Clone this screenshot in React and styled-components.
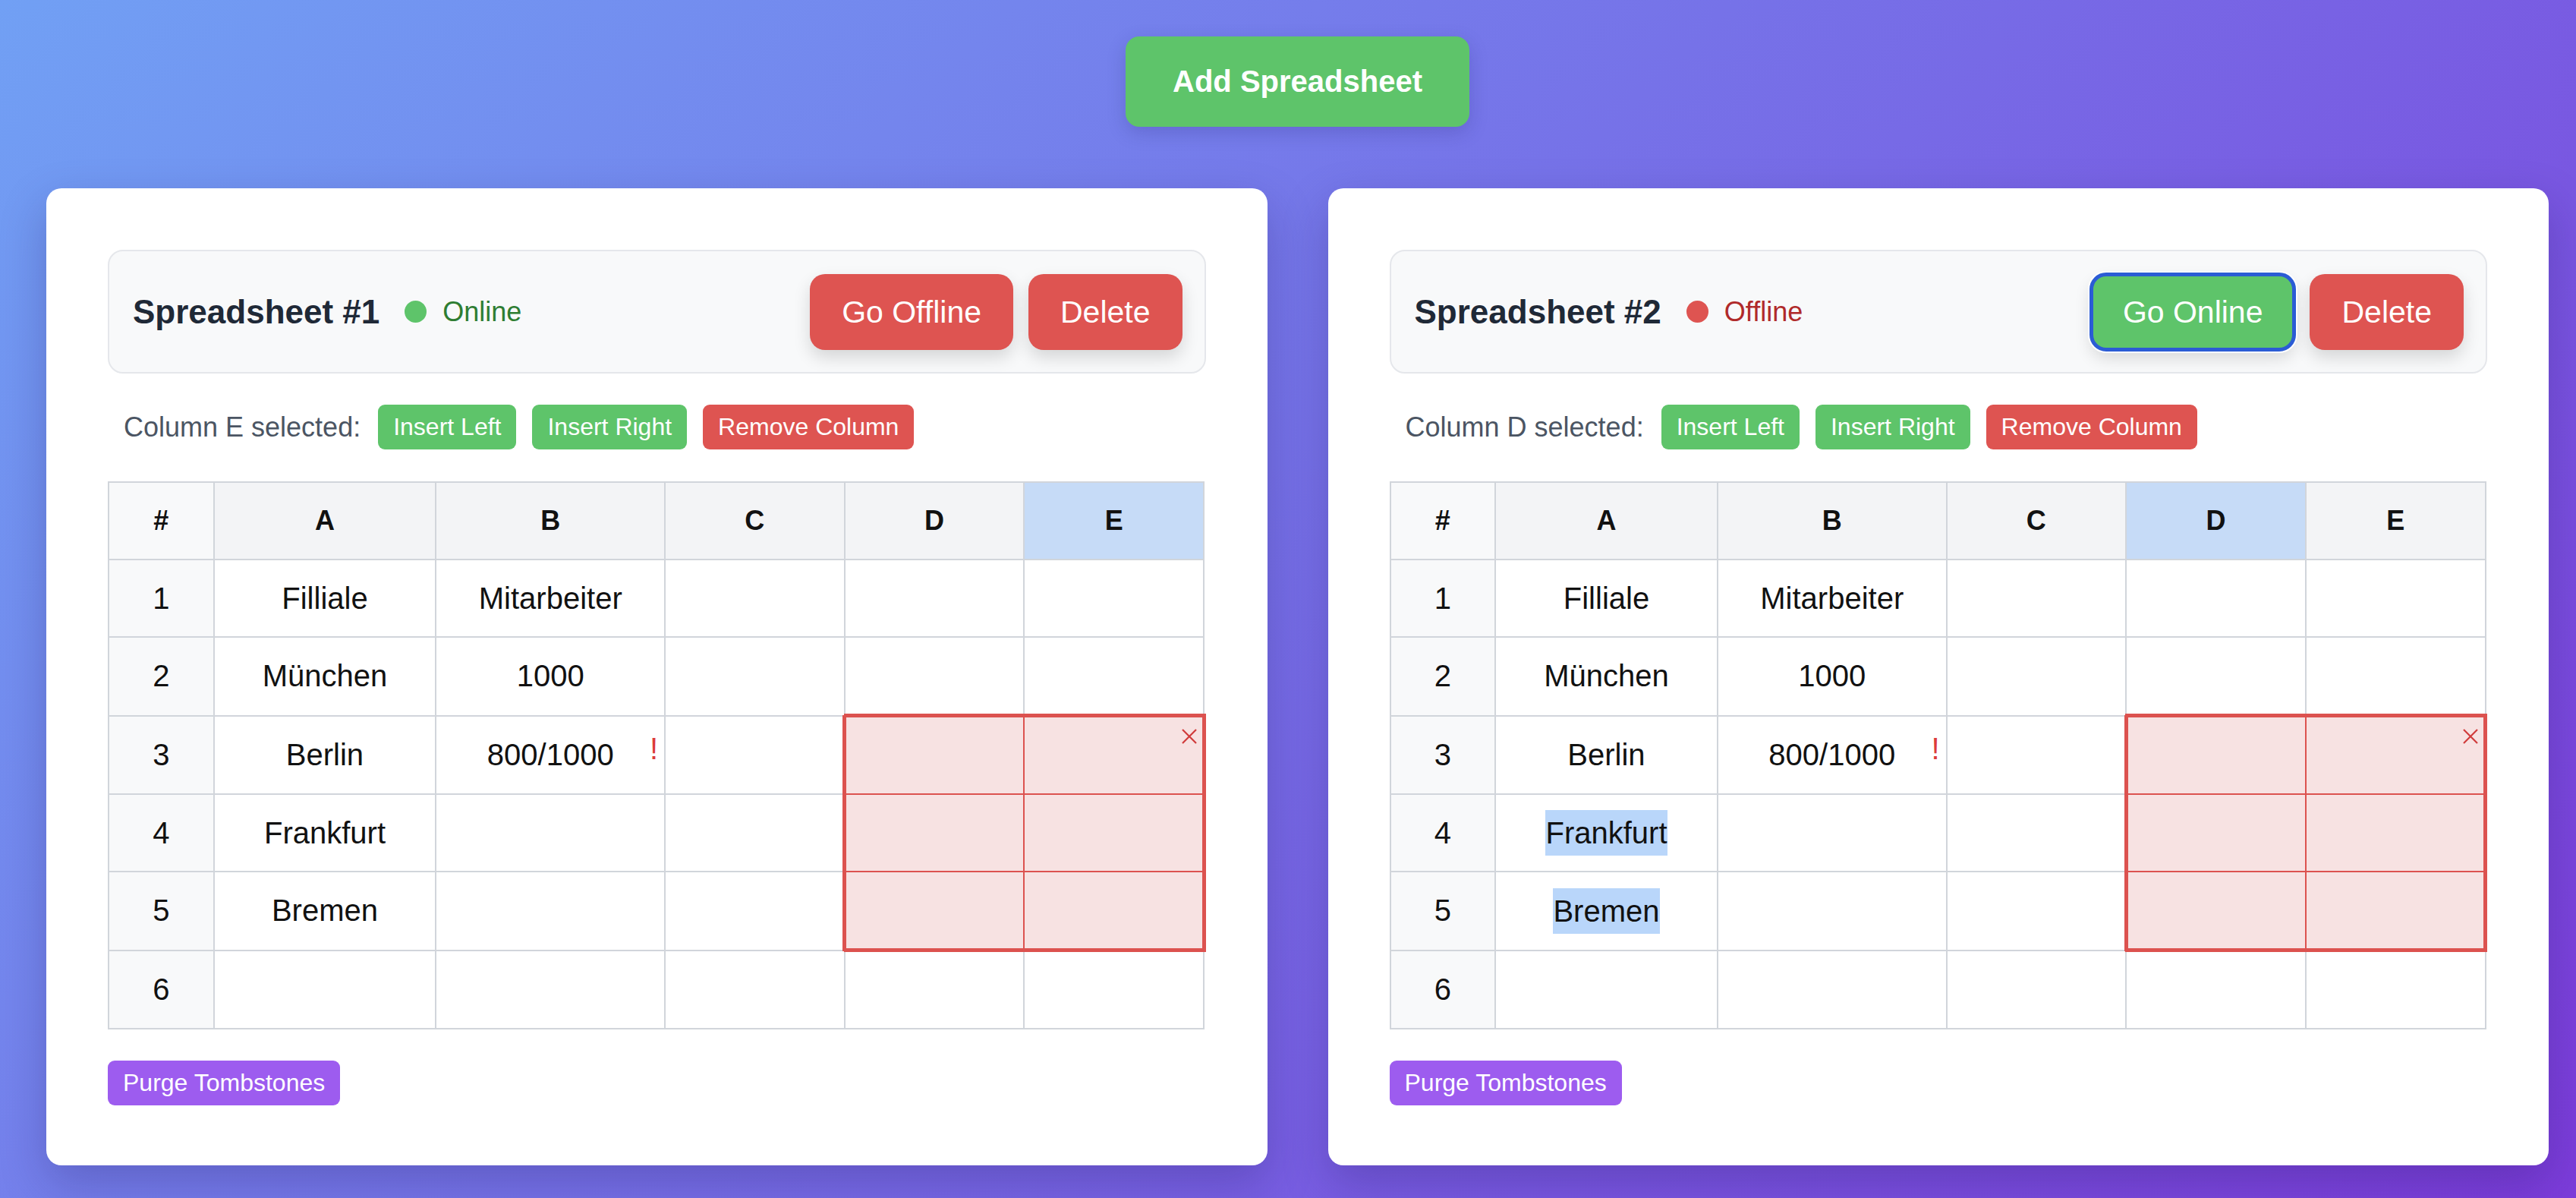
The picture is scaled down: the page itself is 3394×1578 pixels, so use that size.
import React from "react";
import styled, { createGlobalStyle, css } from "styled-components";

const GlobalStyle = createGlobalStyle`
  html, body {
    margin: 0;
    padding: 0;
  }
  html {
    min-height: 100%;
    background: linear-gradient(135deg, #71a0f4 0%, #7c3cda 100%) fixed;
  }
  body {
    font-family: "Liberation Sans", Arial, sans-serif;
    min-height: 100vh;
  }
`;

const Page = styled.main`
  display: flex;
  flex-direction: column;
  align-items: center;
  gap: 81px;
  padding: 48px 36px 45px 61px;
`;

const AddButton = styled.button`
  font-family: inherit;
  font-size: 40px;
  font-weight: 700;
  line-height: 45px;
  color: #fff;
  background: #5ec46a;
  border: none;
  border-radius: 18px;
  padding: 37px 62px;
  box-shadow: 0 8px 24px rgba(40, 40, 120, 0.22);
  cursor: pointer;
`;

const Cards = styled.div`
  align-self: stretch;
  display: flex;
  gap: 80px;
`;

const Card = styled.section`
  flex: 1 1 0;
  min-width: 0;
  display: flex;
  flex-direction: column;
  background: #fff;
  border-radius: 20px;
  padding: 81px 81px 79px;
  box-shadow: 0 24px 60px rgba(30, 20, 90, 0.25);
`;

const Header = styled.header`
  box-sizing: border-box;
  height: 163px;
  display: flex;
  align-items: center;
  justify-content: space-between;
  padding: 0 29px 0 31px;
  background: #f8f9fa;
  border: 2px solid #e5e7eb;
  border-radius: 20px;
`;

const TitleGroup = styled.div`
  display: flex;
  align-items: center;
`;

const Title = styled.h2`
  margin: 0 33px 0 0;
  font-size: 44px;
  font-weight: 700;
  color: #1f2937;
`;

const Dot = styled.span`
  width: 29px;
  height: 29px;
  border-radius: 50%;
  margin-right: 21px;
  background: ${(p) => (p.$online ? "#5ec46a" : "#de5451")};
`;

const Status = styled.span`
  font-size: 36px;
  color: ${(p) => (p.$online ? "#2e7d32" : "#b02a2a")};
`;

const HeaderActions = styled.div`
  display: flex;
  gap: 20px;
`;

const BigButton = styled.button`
  font-family: inherit;
  font-size: 41px;
  line-height: 46px;
  color: #fff;
  border: none;
  border-radius: 20px;
  padding: 27px 42px;
  cursor: pointer;
  background: ${(p) => (p.$tone === "green" ? "#5ec46a" : "#de5451")};
  box-shadow: 0 10px 22px rgba(0, 0, 0, 0.14);
  ${(p) =>
    p.$focused &&
    css`
      outline: 5px solid #2b5cd5;
      outline-offset: -3px;
      box-shadow: 0 0 0 4px #fff, 0 10px 22px rgba(0, 0, 0, 0.14);
    `}
`;

const ColumnBar = styled.div`
  display: flex;
  align-items: center;
  gap: 21px;
  margin-top: 41px;
  padding-left: 21px;
`;

const ColumnLabel = styled.span`
  font-size: 36px;
  color: #4b5563;
  margin-right: 2px;
`;

const SmallButton = styled.button`
  font-family: inherit;
  font-size: 32px;
  line-height: 37px;
  color: #fff;
  border: none;
  border-radius: 9px;
  padding: 11px 20px;
  cursor: pointer;
  background: ${(p) =>
    p.$tone === "green" ? "#5ec46a" : p.$tone === "purple" ? "#9d5cef" : "#de5451"};
`;

const PurgeButton = styled(SmallButton)`
  align-self: flex-start;
  margin-top: 41px;
`;

const Grid = styled.table`
  margin-top: 42px;
  width: 100%;
  table-layout: fixed;
  border-collapse: collapse;
`;

const HeadCell = styled.th`
  height: 100px;
  padding: 0;
  border: 2px solid #d1d5db;
  font-size: 36px;
  font-weight: 700;
  color: #111;
  background: ${(p) => (p.$corner ? "#f8f9fa" : p.$selected ? "#c6dbf7" : "#f3f4f6")};
`;

const RowHead = styled.th`
  height: 100px;
  padding: 0;
  border: 2px solid #d1d5db;
  font-size: 40px;
  font-weight: 400;
  color: #111;
  background: #f8f9fa;
`;

const edge = (on) => (on ? "5px" : "2px");

const Cell = styled.td`
  position: relative;
  height: 100px;
  padding: 0;
  text-align: center;
  vertical-align: middle;
  font-size: 40px;
  color: #111;
  border: 2px solid #d1d5db;
  background: #fff;
  ${(p) =>
    p.$conflict &&
    css`
      background: #f7e2e2;
      border-color: #dc524f;
      border-top-width: ${edge(p.$top)};
      border-bottom-width: ${edge(p.$bottom)};
      border-left-width: ${edge(p.$left)};
      border-right-width: ${edge(p.$right)};
    `}
`;

const Highlight = styled.span`
  display: inline-block;
  line-height: 60px;
  background: #b9d6fa;
`;

const Warning = styled.span`
  position: absolute;
  top: 22px;
  right: 8px;
  font-size: 40px;
  line-height: 1;
  color: #dc3b3b;
`;

const ConflictMark = styled.svg`
  position: absolute;
  top: 14px;
  right: 6px;
  width: 22px;
  height: 22px;
`;

const COLS = ["A", "B", "C", "D", "E"];
const WIDTHS = ["9.6%", "20.3%", "20.9%", "16.4%", "16.4%", "16.4%"];

const ROWS = [
  ["Filliale", "Mitarbeiter", "", "", ""],
  ["München", "1000", "", "", ""],
  ["Berlin", "800/1000", "", "", ""],
  ["Frankfurt", "", "", "", ""],
  ["Bremen", "", "", "", ""],
  ["", "", "", "", ""],
];

const conflict = { r0: 2, r1: 4, c0: 3, c1: 4 };

const SHEETS = [
  { id: 1, online: true, selected: "E", highlight: [] },
  { id: 2, online: false, selected: "D", highlight: ["3-0", "4-0"] },
];

function Sheet({ sheet }) {
  return (
    <Card>
      <Header>
        <TitleGroup>
          <Title>Spreadsheet #{sheet.id}</Title>
          <Dot $online={sheet.online} />
          <Status $online={sheet.online}>{sheet.online ? "Online" : "Offline"}</Status>
        </TitleGroup>
        <HeaderActions>
          {sheet.online ? (
            <BigButton $tone="red">Go Offline</BigButton>
          ) : (
            <BigButton $tone="green" $focused>
              Go Online
            </BigButton>
          )}
          <BigButton $tone="red">Delete</BigButton>
        </HeaderActions>
      </Header>

      <ColumnBar>
        <ColumnLabel>Column {sheet.selected} selected:</ColumnLabel>
        <SmallButton $tone="green">Insert Left</SmallButton>
        <SmallButton $tone="green">Insert Right</SmallButton>
        <SmallButton $tone="red">Remove Column</SmallButton>
      </ColumnBar>

      <Grid>
        <colgroup>
          {WIDTHS.map((w, i) => (
            <col key={i} style={{ width: w }} />
          ))}
        </colgroup>
        <thead>
          <tr>
            <HeadCell $corner>#</HeadCell>
            {COLS.map((c) => (
              <HeadCell key={c} $selected={c === sheet.selected}>
                {c}
              </HeadCell>
            ))}
          </tr>
        </thead>
        <tbody>
          {ROWS.map((row, r) => (
            <tr key={r}>
              <RowHead>{r + 1}</RowHead>
              {row.map((val, c) => {
                const inConflict =
                  r >= conflict.r0 && r <= conflict.r1 && c >= conflict.c0 && c <= conflict.c1;
                const hl = sheet.highlight.includes(`${r}-${c}`);
                return (
                  <Cell
                    key={c}
                    $conflict={inConflict}
                    $top={r === conflict.r0}
                    $bottom={r === conflict.r1}
                    $left={c === conflict.c0}
                    $right={c === conflict.c1}
                  >
                    {hl ? <Highlight>{val}</Highlight> : val}
                    {r === 2 && c === 1 && <Warning>!</Warning>}
                    {r === conflict.r0 && c === conflict.c1 && (
                      <ConflictMark viewBox="0 0 22 22">
                        <path d="M2 2 L20 20 M20 2 L2 20" stroke="#d03b3b" strokeWidth="2.2" fill="none" />
                      </ConflictMark>
                    )}
                  </Cell>
                );
              })}
            </tr>
          ))}
        </tbody>
      </Grid>

      <PurgeButton $tone="purple">Purge Tombstones</PurgeButton>
    </Card>
  );
}

export default function App() {
  return (
    <>
      <GlobalStyle />
      <Page>
        <AddButton>Add Spreadsheet</AddButton>
        <Cards>
          {SHEETS.map((s) => (
            <Sheet key={s.id} sheet={s} />
          ))}
        </Cards>
      </Page>
    </>
  );
}
